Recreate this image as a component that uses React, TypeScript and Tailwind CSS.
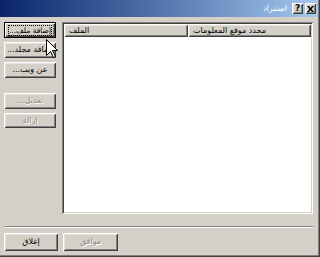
import React from 'react'

const face = 'bg-[#d4d0c8]'
const raised =
  'shadow-[inset_1px_1px_#ffffff,inset_-1px_-1px_#404040,inset_2px_2px_#e4e1dc,inset_-2px_-2px_#808080]'
const raisedDefault =
  'shadow-[inset_0_0_0_1px_#000000,inset_2px_2px_#ffffff,inset_-2px_-2px_#404040,inset_-3px_-3px_#808080]'

function WinButton({
  label,
  disabled,
  isDefault,
  className = '',
}: {
  label: string
  disabled?: boolean
  isDefault?: boolean
  className?: string
}) {
  return (
    <div
      className={`flex items-center justify-center overflow-hidden whitespace-nowrap ${face} ${isDefault ? raisedDefault : raised} ${className}`}
    >
      <span
        dir="rtl"
        className={
          isDefault
            ? 'text-[7.5px] leading-[9px] outline outline-1 outline-dotted outline-[#000] text-black'
            : disabled
              ? 'text-[#8c8a85] [text-shadow:1px_1px_0_#ffffff]'
              : 'text-black'
        }
      >
        {label}
      </span>
    </div>
  )
}

function HeaderCell({ label, className = '' }: { label: string; className?: string }) {
  return (
    <div className={`flex h-[13px] items-center whitespace-nowrap pl-[5px] ${face} ${raised} ${className}`}>
      <span dir="rtl" className="text-black">
        {label}
      </span>
    </div>
  )
}

export default function App() {
  return (
    <div
      className={`relative flex h-[257px] w-[320px] flex-col overflow-hidden ${face} pb-[2px] pr-[2px] text-[8px] shadow-[inset_-1px_-1px_#404040,inset_-2px_-2px_#808080]`}
      style={{ fontFamily: '"DejaVu Sans", Tahoma, sans-serif' }}
    >
      {/* title bar */}
      <div className="flex h-[17px] shrink-0 items-center justify-end bg-gradient-to-r from-[#0a246a] to-[#a6caf0] pr-[2px]">
        <span dir="rtl" className="mr-[5px] text-[8px] text-white">
          استيراد
        </span>
        <div className={`flex h-[11px] w-[11px] items-center justify-center ${face} ${raised}`}>
          <span className="text-[9px] font-bold leading-none text-black">?</span>
        </div>
        <div className={`ml-[2px] flex h-[11px] w-[11px] items-center justify-center ${face} ${raised}`}>
          <svg width="7" height="6" viewBox="0 0 7 6">
            <path d="M0 0h2l1.5 2L5 0h2L4.5 3 7 6H5L3.5 4 2 6H0l2.5-3z" fill="#000" />
          </svg>
        </div>
      </div>

      {/* main */}
      <div className="flex gap-[6px] pl-[4px] pr-[5px] pt-[5px]">
        <div className="flex w-[52px] shrink-0 flex-col">
          <WinButton label="إضافة ملف..." isDefault className="h-[16px]" />
          <WinButton label="إضافة مجلد..." className="mt-[4px] h-[16px]" />
          <WinButton label="عن ويب..." className="mt-[4px] h-[16px]" />
          <WinButton label="تعديل..." disabled className="mt-[15px] h-[16px]" />
          <WinButton label="إزالة" disabled className="mt-[4px] h-[15px]" />
        </div>

        <div className="flex h-[192px] flex-1 flex-col bg-white p-[2px] shadow-[inset_1px_1px_#808080,inset_-1px_-1px_#ffffff,inset_2px_2px_#404040,inset_-2px_-2px_#d4d0c8]">
          <div className="flex">
            <HeaderCell label="الملف" className="w-[124px]" />
            <HeaderCell label="محدد موقع المعلومات" className="flex-1" />
          </div>
          <div className="flex-1 bg-white" />
        </div>
      </div>

      {/* separator */}
      <div className="ml-[5px] mr-[5px] mt-[12px] h-[2px] shadow-[inset_0_1px_#808080,inset_0_-1px_#ffffff]" />

      {/* bottom buttons */}
      <div className="mt-[5px] flex gap-[5px] pl-[4px]">
        <WinButton label="إغلاق" className="h-[18px] w-[54px]" />
        <WinButton label="موافق" disabled className="h-[18px] w-[55px]" />
      </div>

      {/* mouse pointer */}
      <svg className="absolute left-[46px] top-[39px]" width="13" height="20" viewBox="0 0 13 20">
        <path
          d="M0.5 0.5 L0.5 16.5 L4.5 12.5 L7.5 18.5 L9.5 17.5 L6.5 11.5 L11.5 11.5 Z"
          fill="#fff"
          stroke="#000"
          strokeWidth="1"
        />
      </svg>
    </div>
  )
}
